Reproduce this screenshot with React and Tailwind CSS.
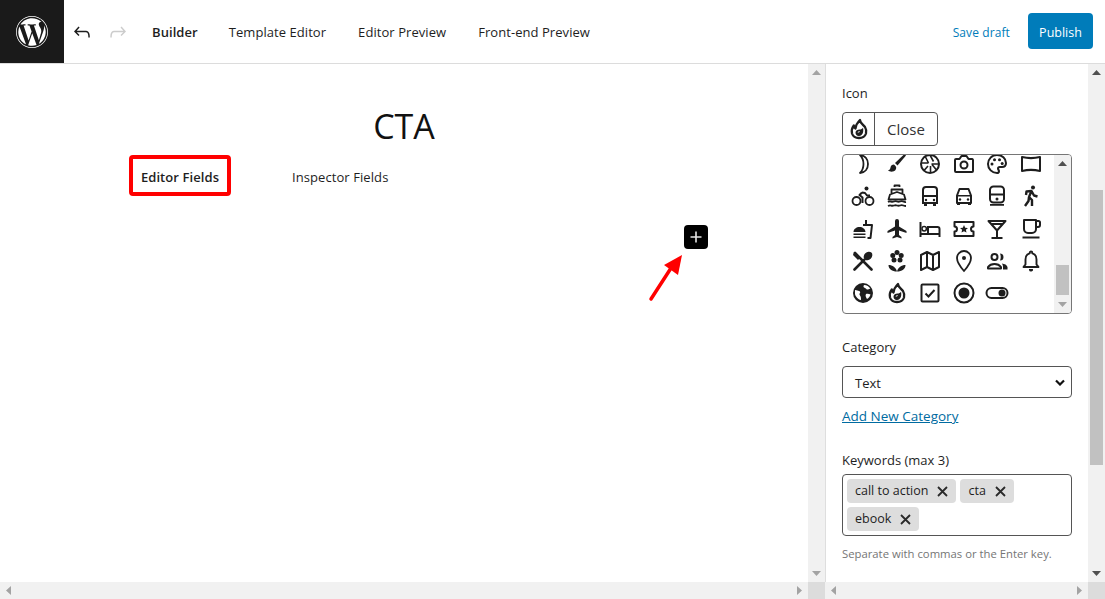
import React from "react";

const Svg = ({ children, size = 24, className = "" }) => (
  <svg width={size} height={size} viewBox="0 0 24 24" fill="currentColor" className={className}>{children}</svg>
);

const flame = (
  <>
    <path d="M13 3c0 3 3 4.500 5 7 1.500 2.500 1.500 4.500 1 6.500-1 3-4 4.500-7 4.500s-6-1.500-7-4.500c-.7-2.500 0-5.500 1.800-8 .3 1.500.9 2.500 1.700 3 .3-3 2-6 4.500-8.500z" fill="none" stroke="currentColor" strokeWidth="2.300" strokeLinejoin="round" />
    <path d="M8.500 15.500c0-2 2-3 4-3 1.500 0 2.800-.7 3.500-1.800.7 3.300.3 7.800-4 8.300-2 .2-3.500-1.300-3.500-3.500z" />
    <path d="M10.500 15.500c.3-.9 1.200-1.300 2.500-1.300-.4 1-1.300 1.500-2.500 1.300z" fill="#fff" />
  </>
);

const icons = [
  <path d="M9 3c5 .5 8 4.200 8 9s-3 8.500-8 9c2.500-2.500 3.500-5.500 3.500-9S11.500 5.500 9 3z" fill="none" stroke="currentColor" strokeWidth="1.800" strokeLinejoin="round" />,
  <><path d="M21 3.500 19.500 2 10 11l2.500 2.500z" /><path d="M9 12.500c-2 0-3.200 1.200-3.500 3-.2 1.500-1 2.500-2.500 3 2 1.700 6 1.500 7.500-.5 1-1.500 1-3-.2-4.200z" /></>,
  <><circle cx="12" cy="12" r="9" fill="none" stroke="currentColor" strokeWidth="2" /><path d="M12 3l3.500 6.500M21 12h-7.500M18.500 18l-4.500-5.500M6 18.500 10 14M3.200 11h7.300M7.500 5l3 6M12.500 21v-7" stroke="currentColor" strokeWidth="1.600" /></>,
  <><path d="M4 7h3.500L9.500 4h5l2 3H20a1.500 1.500 0 0 1 1 1v11a1 1 0 0 1-1 1H4a1 1 0 0 1-1-1V8a1 1 0 0 1 1-1z" fill="none" stroke="currentColor" strokeWidth="2" strokeLinejoin="round" /><circle cx="12" cy="13" r="3.500" fill="none" stroke="currentColor" strokeWidth="2" /></>,
  <><path d="M12 3a9 9 0 1 0 0 18c1.500 0 2-1 2-1.800 0-1.200-1-1.500-1-2.700 0-1 .8-1.500 1.800-1.500H17c2.500 0 4-1.800 4-4 0-4.500-4-8-9-8z" fill="none" stroke="currentColor" strokeWidth="2" /><circle cx="7" cy="12" r="1.500" /><circle cx="9.500" cy="7.800" r="1.500" /><circle cx="14.500" cy="7.800" r="1.500" /><circle cx="17.200" cy="11.500" r="1.500" /></>,
  <path d="M3 5c6 1.500 12 1.500 18 0v14c-6-1.500-12-1.500-18 0z" fill="none" stroke="currentColor" strokeWidth="2" strokeLinejoin="round" />,

  <><circle cx="5.500" cy="17" r="4" fill="none" stroke="currentColor" strokeWidth="1.800" /><circle cx="18.500" cy="17" r="4" fill="none" stroke="currentColor" strokeWidth="1.800" /><circle cx="15.500" cy="4.500" r="2" /><path d="M11 8.500 8.500 11l3 2.500V19M11 8.500l3 .5 2 2.500h3" fill="none" stroke="currentColor" strokeWidth="2" strokeLinejoin="round" /></>,
  <><path d="M9.500 3V1.500h5V3M6.500 10V5.500h11V10M3.500 15.500 5 10.500l7-2.500 7 2.500 1.500 5z" fill="none" stroke="currentColor" strokeWidth="1.800" strokeLinejoin="round" /><path d="M3 18c3-2 3 1 6-.5 3-1.500 3 1.500 6 0s3 1 6 .5M3 22c3-1.500 3 .5 6-.5 3-1 3 1 6 0s3 .5 6 .5" fill="none" stroke="currentColor" strokeWidth="1.800" /></>,
  <><path d="M5 6a3 3 0 0 1 3-3h8a3 3 0 0 1 3 3v13H5z" fill="none" stroke="currentColor" strokeWidth="2" /><path d="M5 11h14v2H5zM6 19h3v3H6zM15 19h3v3h-3z" /><circle cx="8" cy="16" r="1.200" /><circle cx="16" cy="16" r="1.200" /></>,
  <><path d="M7.500 5h9l2.500 6.500V19H5v-7.500z" fill="none" stroke="currentColor" strokeWidth="2" strokeLinejoin="round" /><path d="M5 11h14v1.500H5zM5 19h3v2H5zM16 19h3v2h-3z" /><circle cx="8" cy="15.500" r="1.200" /><circle cx="16" cy="15.500" r="1.200" /></>,
  <><rect x="5" y="2.500" width="14" height="16" rx="3.500" fill="none" stroke="currentColor" strokeWidth="2" /><path d="M5 9.500h14v2H5zM5 20h14v1.800H5z" /><circle cx="12" cy="15" r="1.500" /></>,
  <><circle cx="14" cy="3.500" r="2" /><path d="M6 22l3.500-5 .5-4 3 3v6M7 11l.5-3.500 5-.5 2.500 4.500 3.500 1M10 13l2.500-6" fill="none" stroke="currentColor" strokeWidth="2.400" strokeLinejoin="round" /></>,

  <><path d="M2.500 21h12v-1.600h-12zM2.500 18h12v-1.600h-12zM2.500 15c0-3 3-5 6-5s6 2 6 5z" /><path d="M15 8V3M12 8h9l-1.500 13h-3" fill="none" stroke="currentColor" strokeWidth="2" strokeLinejoin="round" /></>,
  <path d="M21.500 16v-2L14 9.500V4a2 2 0 0 0-4 0v5.500L2.500 14v2l7.500-2.500V18l-2.500 2v1.500L12 20l4.500 1.500V20L14 18v-4.500z" />,
  <><path d="M2.500 5v15M2.500 17h19M21.500 20v-8a2 2 0 0 0-2-2H10v7" fill="none" stroke="currentColor" strokeWidth="2" /><circle cx="6.200" cy="11.800" r="2.200" fill="none" stroke="currentColor" strokeWidth="1.500" /></>,
  <><path d="M2.500 5h19v4.500a2.500 2.500 0 0 0 0 5V19h-19v-4.500a2.500 2.500 0 0 0 0-5z" fill="none" stroke="currentColor" strokeWidth="2" strokeLinejoin="round" /><path d="m12 8 1.200 2.700 2.800.3-2.100 1.800.6 2.800L12 14.200l-2.500 1.400.6-2.800L8 11l2.800-.3z" /></>,
  <path d="M3.500 4h17L12 13.500zM12 13.500V21M6.500 21h11M6 7h12" fill="none" stroke="currentColor" strokeWidth="2" strokeLinejoin="round" />,
  <path d="M5 3h12v9a4 4 0 0 1-4 4H9a4 4 0 0 1-4-4zM17 4h2.500a1.500 1.500 0 0 1 1.500 1.500V8a2 2 0 0 1-2 2h-2.500M3.500 20.500h17" fill="none" stroke="currentColor" strokeWidth="2" strokeLinejoin="round" />,

  <><path d="M4 4 20.500 20.500M3.500 20.500 13 11" fill="none" stroke="currentColor" strokeWidth="2.600" strokeLinecap="round" /><ellipse cx="17" cy="7" rx="3.800" ry="4.800" transform="rotate(45 17 7)" /><path d="M3 3 9 9 7 11 2 6z" /></>,
  <><circle cx="12" cy="3.500" r="2.500" /><circle cx="7.800" cy="6.500" r="2.500" /><circle cx="16.200" cy="6.500" r="2.500" /><circle cx="9" cy="11" r="2.500" /><circle cx="15" cy="11" r="2.500" /><circle cx="12" cy="7.500" r="1.500" fill="#fff" /><path d="M12 22.500c-1-4-4.500-6.500-8.500-6.500 0 4 3.500 6.500 8.500 6.500zM12 22.500c1-4 4.500-6.500 8.500-6.500 0 4-3.500 6.500-8.500 6.500z" /></>,
  <path d="M3 6l6-3 6 3 6-3v15l-6 3-6-3-6 3zM9 3v15M15 6v15" fill="none" stroke="currentColor" strokeWidth="2" strokeLinejoin="round" />,
  <><path d="M12 2a7 7 0 0 0-7 7c0 5 7 13 7 13s7-8 7-13a7 7 0 0 0-7-7z" fill="none" stroke="currentColor" strokeWidth="1.800" /><circle cx="12" cy="9" r="2" /></>,
  <><circle cx="9.500" cy="8" r="3" fill="none" stroke="currentColor" strokeWidth="2" /><path d="M3 19.500v-1.500c1.500-2 4-3 6.500-3s5 1 6.500 3v1.500z" fill="none" stroke="currentColor" strokeWidth="2" strokeLinejoin="round" /><path d="M15 4.500a3.500 3.500 0 0 1 0 7c1-2 1-5 0-7zM17 14.500c2.500.3 5 1.500 5.500 3.500v2.500H18V18c0-1.300-.3-2.500-1-3.500z" /></>,
  <><path d="M12 2.500a1.300 1.300 0 0 1 1.300 1.300v.6c2.800.7 4.200 3 4.200 6v5l2 2.600H4.500l2-2.600v-5c0-3 1.400-5.300 4.200-6v-.6A1.300 1.300 0 0 1 12 2.500z" fill="none" stroke="currentColor" strokeWidth="1.900" strokeLinejoin="round" /><path d="M10 20h4a2 2 0 0 1-4 1z" /></>,

  <><circle cx="12" cy="12" r="10" /><path d="M4 9c2 0 3 1 4 1s1.500 1 1 2-1 1 0 2.500 1 2.500 1 4.500c-3-.5-5.500-3.500-6-6zM13 4c-1 1.500-.5 2.500 1 3s1.500 2 3 1.500 2-1 2.500-.5A8 8 0 0 0 13 4zM15 13c2-.5 3 0 4.500.5-.5 2-2 4-3.500 4.500-1-1.500-2-3.500-1-5z" fill="#fff" /></>,
  flame,
  <><rect x="3.500" y="3.500" width="17" height="17" rx="1" fill="none" stroke="currentColor" strokeWidth="2" /><path d="m7.500 12.500 3 3 6-6.500" fill="none" stroke="currentColor" strokeWidth="2" /></>,
  <><circle cx="12" cy="12" r="9.500" fill="none" stroke="currentColor" strokeWidth="2" /><circle cx="12" cy="12" r="5.500" /></>,
  <><rect x="1.500" y="7" width="21" height="10" rx="5" fill="none" stroke="currentColor" strokeWidth="2" /><circle cx="17" cy="12" r="3.500" /></>,
];

const arrowPaths = { up: "M0 5 L4.500 0 L9 5z", down: "M0 0 L9 0 L4.500 5z", left: "M5 0 L5 9 L0 4.500z", right: "M0 0 L0 9 L5 4.500z" };

const Arrow = ({ dir, dark = false }) => {
  const vertical = dir === "up" || dir === "down";
  return (
    <svg width={vertical ? 9 : 5} height={vertical ? 5 : 9} viewBox={vertical ? "0 0 9 5" : "0 0 5 9"} fill={dark ? "#505050" : "#a3a3a3"}>
      <path d={arrowPaths[dir]} />
    </svg>
  );
};

const Chip = ({ children }) => (
  <span className="h-6 px-2 pt-px bg-[#ddd] rounded-sm flex items-center gap-[9px] text-[12.500px] text-[#1e1e1e]">
    {children}
    <svg width="11" height="11" viewBox="0 0 11 11" className="text-[#2a2a2a]"><path d="M1 1l9 9M10 1l-9 9" stroke="currentColor" strokeWidth="1.800" /></svg>
  </span>
);

export default function App() {
  return (
    <div className="w-[1105px] h-[599px] overflow-hidden flex flex-col bg-white text-[#1e1e1e] font-['Open_Sans','Noto_Sans',sans-serif] text-[13px]">
      <header className="h-16 shrink-0 flex items-center border-b border-[#dcdcdc] bg-white">
        <div className="w-16 h-[63px] bg-[#1a1a1a] flex items-center justify-center">
          <svg width="32" height="32" viewBox="0 0 122.520 122.520" fill="#fff">
            <path d="M8.708 61.260c0 20.802 12.089 38.779 29.619 47.298L13.258 39.872a52.354 52.354 0 0 0-4.550 21.388zM96.740 58.608c0-6.495-2.333-10.993-4.334-14.494-2.664-4.329-5.161-7.995-5.161-12.324 0-4.831 3.664-9.328 8.825-9.328.233 0 .454.029.681.042-9.350-8.566-21.807-13.796-35.489-13.796-18.360 0-34.513 9.420-43.910 23.688 1.233.037 2.395.063 3.382.063 5.497 0 14.006-.667 14.006-.667 2.833-.167 3.167 3.994.337 4.329 0 0-2.847.335-6.015.501L48.200 93.547l11.501-34.493-8.188-22.434c-2.830-.166-5.511-.501-5.511-.501-2.832-.166-2.500-4.496.332-4.329 0 0 8.679.667 13.843.667 5.496 0 14.006-.667 14.006-.667 2.835-.167 3.168 3.994.337 4.329 0 0-2.853.335-6.015.501l18.992 56.494 5.242-17.517c2.272-7.269 4.001-12.490 4.001-16.989z" />
            <path d="m62.184 65.857-15.768 45.819a52.552 52.552 0 0 0 14.846 2.141c6.120 0 11.989-1.058 17.452-2.979a4.570 4.570 0 0 1-.374-.724zM107.376 36.046c.226 1.674.354 3.471.354 5.404 0 5.333-.996 11.328-3.996 18.824l-16.053 46.413c15.624-9.111 26.133-26.038 26.133-45.426.001-9.137-2.333-17.729-6.438-25.215z" />
            <path d="M61.262 0C27.483 0 0 27.481 0 61.260c0 33.783 27.483 61.263 61.262 61.263 33.778 0 61.265-27.480 61.265-61.263C122.526 27.481 95.040 0 61.262 0zm0 119.715c-32.230 0-58.453-26.223-58.453-58.455 0-32.230 26.222-58.451 58.453-58.451 32.229 0 58.450 26.221 58.450 58.451 0 32.232-26.221 58.455-58.450 58.455z" />
          </svg>
        </div>
        <svg width="24" height="24" viewBox="0 0 24 24" className="ml-[6px] text-[#1e1e1e]" fill="currentColor"><path d="M18.300 11.700c-.6-.6-1.400-.9-2.300-.9H6.700l2.900-3.300-1.100-1-4.500 5L8.500 16l1-1-2.700-2.700H16c.5 0 .9.200 1.300.5 1 1 1 3.400 1 4.500v.3h1.500v-.2c0-1.500 0-4.300-1.500-5.700z" /></svg>
        <svg width="24" height="24" viewBox="0 0 24 24" className="ml-[12px] text-[#cccccc]" fill="currentColor"><path d="M15.600 6.500l-1.100 1 2.900 3.300H8c-.9 0-1.700.3-2.300.9-1.400 1.500-1.400 4.200-1.400 5.700v.2h1.500v-.3c0-1.100 0-3.500 1-4.500.3-.3.700-.5 1.300-.5h9.200L14.500 15l1 1.100 4.500-4.600-4.400-5z" /></svg>
        <nav className="flex items-center ml-[22px] mt-[2px] text-[13px] tracking-[0.06px]">
          <span className="font-semibold">Builder</span>
          <span className="ml-[31px]">Template Editor</span>
          <span className="ml-8">Editor Preview</span>
          <span className="ml-8">Front-end Preview</span>
        </nav>
        <div className="ml-auto flex items-center mr-3">
          <span className="text-[#007cba] text-[12px] tracking-[0.1px] mt-[2px] mr-[18px]">Save draft</span>
          <span className="w-[65px] h-9 mb-px pt-[4px] bg-[#007cba] rounded-sm text-white text-[12.500px] flex items-center justify-center">Publish</span>
        </div>
      </header>

      <div className="flex-1 min-h-0 flex flex-col">
        <div className="flex-1 min-h-0 flex">
          <main className="relative w-[808px] shrink-0">
            <h1 className="mt-[40px] text-center text-[34px] leading-[44px] font-normal text-[#111]">CTA</h1>
            <div className="flex items-center ml-[129px] mt-[7px] tracking-[0.08px]">
              <span className="w-[102px] h-[41px] pt-1 flex items-center justify-center border-4 border-[#ff0000] rounded-sm font-semibold text-[13px]">Editor Fields</span>
              <span className="ml-[61px] pt-1 text-[13px]">Inspector Fields</span>
            </div>
            <div className="absolute left-[684px] top-[161px] w-6 h-6 bg-black rounded-sm flex items-center justify-center">
              <svg width="12" height="12" viewBox="0 0 12 12"><path d="M6 .5v11M.5 6h11" stroke="#e5e5e5" strokeWidth="1.600" /></svg>
            </div>
            <svg className="absolute left-[645px] top-[186px]" width="42" height="54" viewBox="0 0 42 54">
              <path d="M6 49 28 15" stroke="#ff0000" strokeWidth="3.500" strokeLinecap="round" />
              <path d="M37 5 33 25 19 15z" fill="#ff0000" />
            </svg>
          </main>

          <div className="w-[18px] shrink-0 bg-[#f1f1f1] border-r border-[#dedede] flex flex-col items-center justify-between py-[6px]">
            <Arrow dir="up" />
            <Arrow dir="down" />
          </div>

          <aside className="w-[262px] shrink-0 pl-4 pr-4 pt-[20px] text-[13px]">
            <div className="leading-[18px]">Icon</div>
            <div className="mt-[10px] w-24 h-[34px] border border-[#555] rounded-sm flex items-center">
              <div className="w-8 h-full flex items-center justify-center border-r border-[#555]">
                <Svg size="24">{flame}</Svg>
              </div>
              <span className="flex-1 text-center text-[15px] text-[#333]">Close</span>
            </div>
            <div className="mt-2 h-[160px] border border-[#767676] rounded-sm flex overflow-hidden">
              <div className="relative flex-1 overflow-hidden">
                <div className="absolute left-[8px] top-[-3px] grid grid-cols-[repeat(6,24px)] auto-rows-[24px] gap-x-[9.600px] gap-y-[8.250px]">
                  {icons.map((icon, i) => (
                    <Svg key={i}>{icon}</Svg>
                  ))}
                </div>
              </div>
              <div className="w-[17px] shrink-0 bg-[#f1f1f1] relative flex flex-col items-center justify-between py-[6px]">
                <Arrow dir="up" dark />
                <div className="absolute left-[2px] right-[2px] top-[110px] h-[30px] bg-[#c1c1c1]" />
                <Arrow dir="down" />
              </div>
            </div>

            <div className="mt-[24px] leading-[18px]">Category</div>
            <div className="mt-[10px] h-8 border border-[#555] rounded-sm flex items-center justify-between pl-3 pr-[6px]">
              <span className="pt-[3px]">Text</span>
              <svg width="10" height="7" viewBox="0 0 10 7"><path d="M1 1.500l4 4 4-4" fill="none" stroke="#111" strokeWidth="2.200" /></svg>
            </div>
            <div className="mt-[9px] text-[#006ba1] underline text-[13.500px] leading-[18px]">Add New Category</div>

            <div className="mt-[26px] leading-[18px]">Keywords (max 3)</div>
            <div className="mt-[5px] h-[62px] border border-[#555] rounded-sm p-1 flex flex-wrap gap-x-1 gap-y-1">
              <Chip>call to action</Chip>
              <Chip>cta</Chip>
              <Chip>ebook</Chip>
            </div>
            <div className="mt-[10px] text-[11.300px] leading-[16px] text-[#757575]">Separate with commas or the Enter key.</div>
          </aside>

          <div className="w-[17px] shrink-0 bg-[#f1f1f1] relative flex flex-col items-center justify-between py-[6px]">
            <Arrow dir="up" dark />
            <div className="absolute left-[2px] right-[2px] top-[126px] h-[275px] bg-[#c1c1c1]" />
            <Arrow dir="down" dark />
          </div>
        </div>

        <div className="h-[17px] shrink-0 flex bg-[#f1f1f1]">
          <div className="w-[808px] flex items-center justify-between px-[6px]">
            <Arrow dir="left" />
            <Arrow dir="right" />
          </div>
          <div className="w-[17px] bg-[#dcdcdc]" />
          <div className="w-[263px] flex items-center justify-between px-[6px]">
            <Arrow dir="left" />
            <Arrow dir="right" />
          </div>
          <div className="w-[17px] bg-[#dcdcdc]" />
        </div>
      </div>
    </div>
  );
}
